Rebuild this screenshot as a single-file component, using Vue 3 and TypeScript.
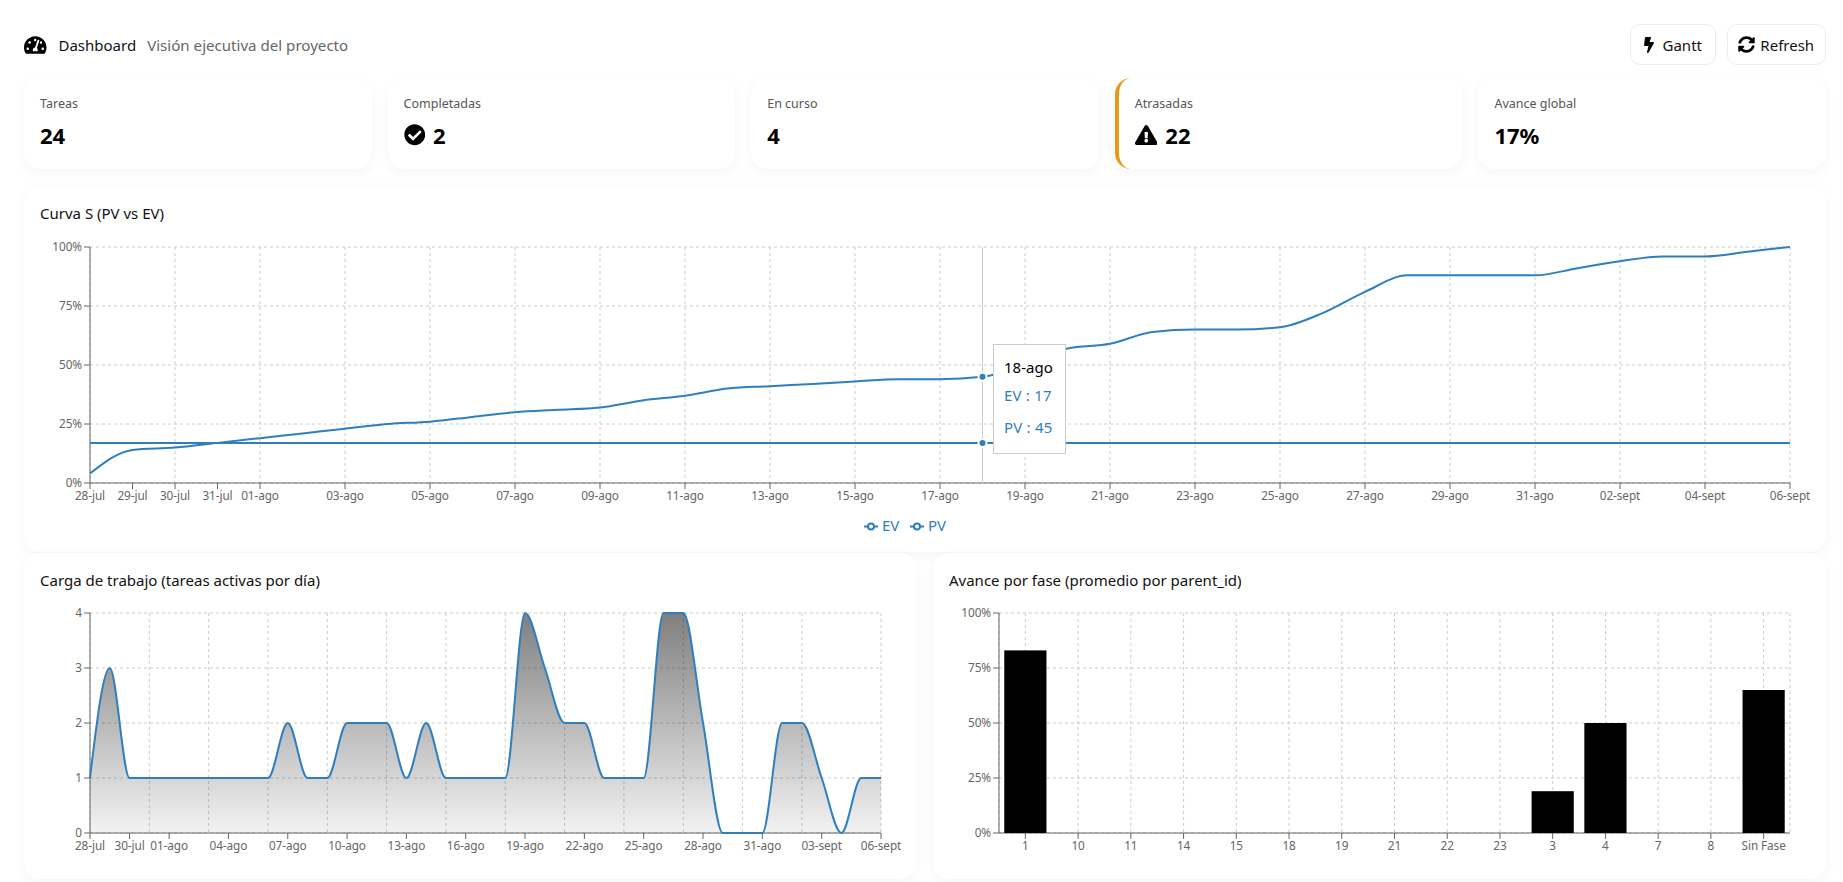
<script setup lang="ts">
type Pt = [number, number]

function sign(v: number): number {
  return v < 0 ? -1 : 1
}

function monotone(pts: Pt[]): string {
  const n = pts.length
  const t: number[] = new Array(n).fill(0)
  for (let i = 1; i < n - 1; i++) {
    const h0 = pts[i][0] - pts[i - 1][0]
    const h1 = pts[i + 1][0] - pts[i][0]
    const s0 = (pts[i][1] - pts[i - 1][1]) / h0
    const s1 = (pts[i + 1][1] - pts[i][1]) / h1
    const p = (s0 * h1 + s1 * h0) / (h0 + h1)
    t[i] = (sign(s0) + sign(s1)) * Math.min(Math.abs(s0), Math.abs(s1), 0.5 * Math.abs(p)) || 0
  }
  const end = (a: number, b: number, tan: number) =>
    (3 * (pts[b][1] - pts[a][1])) / (pts[b][0] - pts[a][0]) / 2 - tan / 2
  t[0] = end(0, 1, t[1])
  t[n - 1] = end(n - 2, n - 1, t[n - 2])
  let d = `M${pts[0][0]},${pts[0][1]}`
  for (let i = 0; i < n - 1; i++) {
    const dx = (pts[i + 1][0] - pts[i][0]) / 3
    d += `C${pts[i][0] + dx},${pts[i][1] + dx * t[i]},${pts[i + 1][0] - dx},${pts[i + 1][1] - dx * t[i + 1]},${pts[i + 1][0]},${pts[i + 1][1]}`
  }
  return d
}

function dayLabel(i: number): string {
  const start = Date.UTC(2025, 6, 28)
  const date = new Date(start + i * 86400000)
  const dd = String(date.getUTCDate()).padStart(2, '0')
  const months = ['ene', 'feb', 'mar', 'abr', 'may', 'jun', 'jul', 'ago', 'sept']
  return `${dd}-${months[date.getUTCMonth()]}`
}

const cards = [
  { label: 'Tareas', value: '24', icon: '', warn: false },
  { label: 'Completadas', value: '2', icon: 'check', warn: false },
  { label: 'En curso', value: '4', icon: '', warn: false },
  { label: 'Atrasadas', value: '22', icon: 'warn', warn: true },
  { label: 'Avance global', value: '17%', icon: '', warn: false },
]

/* Curva S */
const sLeft = 90
const sRight = 1790
const sTop = 247
const sBottom = 483
const sDay = (sRight - sLeft) / 40
const sX = (i: number) => sLeft + i * sDay
const sY = (v: number) => sBottom - (v / 100) * (sBottom - sTop)
const pv = [
  4, 14, 15, 17, 19, 21, 23, 25, 26, 28, 30, 31, 32, 35, 37, 40, 41, 42, 43, 44, 44, 45, 50, 57, 59, 64,
  65, 65, 66, 72, 81, 88, 88, 88, 88, 91, 94, 96, 96, 98, 100,
]
const pvPath = monotone(pv.map((v, i): Pt => [sX(i), sY(v)]))
const evY = sY(17)
const sTicks = [0, 1, 2, 3, ...Array.from({ length: 19 }, (_, k) => 4 + k * 2)]
const sGrid = Array.from({ length: 21 }, (_, k) => sX(k * 2))
const sH = [0, 25, 50, 75, 100]

/* Carga */
const cLeft = 90
const cRight = 881
const cTop = 613
const cBottom = 833
const cDay = (cRight - cLeft) / 40
const cX = (i: number) => cLeft + i * cDay
const cY = (v: number) => cBottom - (v / 4) * (cBottom - cTop)
const load = [
  1, 3, 1, 1, 1, 1, 1, 1, 1, 1, 2, 1, 1, 2, 2, 2, 1, 2, 1, 1, 1, 1, 4, 3, 2, 2, 1, 1, 1, 4, 4, 2, 0, 0, 0, 2,
  2, 1, 0, 1, 1,
]
const loadPath = monotone(load.map((v, i): Pt => [cX(i), cY(v)]))
const areaPath = `${loadPath}L${cRight},${cBottom}L${cLeft},${cBottom}Z`
const cTicks = [0, 2, 4, 7, 10, 13, 16, 19, 22, 25, 28, 31, 34, 37, 40]
const cGrid = [0, 3, 6, 9, 12, 15, 18, 21, 24, 27, 30, 33, 36, 40].map(cX)
const cH = [0, 1, 2, 3, 4]

/* Avance */
const pLeft = 999
const pRight = 1790
const phases = [
  { name: '1', v: 83 },
  { name: '10', v: 0 },
  { name: '11', v: 0 },
  { name: '14', v: 0 },
  { name: '15', v: 0 },
  { name: '18', v: 0 },
  { name: '19', v: 0 },
  { name: '21', v: 0 },
  { name: '22', v: 0 },
  { name: '23', v: 0 },
  { name: '3', v: 19 },
  { name: '4', v: 50 },
  { name: '7', v: 0 },
  { name: '8', v: 0 },
  { name: 'Sin Fase', v: 65 },
]
const band = (pRight - pLeft) / phases.length
const pX = (i: number) => pLeft + band * (i + 0.5)
const barW = band * 0.8
const pY = (v: number) => cBottom - (v / 100) * (cBottom - cTop)
const pGrid = [pLeft, ...phases.map((_, i) => pX(i)), pRight]
</script>

<template>
  <div class="page">
    <header class="top">
      <div class="heading">
        <svg class="ic-dash" viewBox="0 0 576 512" aria-hidden="true">
          <path d="M288 32C128.94 32 0 160.94 0 320c0 52.8 14.25 102.26 39.06 144.8 5.61 9.62 16.3 15.2 27.44 15.2h443c11.14 0 21.83-5.58 27.44-15.2C561.75 422.26 576 372.8 576 320c0-159.06-128.94-288-288-288zm0 64c14.71 0 26.58 10.13 30.32 23.65-1.11 2.26-2.64 4.23-3.45 6.67l-9.22 27.67c-5.13 3.49-10.97 6.01-17.64 6.01-17.67 0-32-14.33-32-32S270.33 96 288 96zM96 384c-17.67 0-32-14.33-32-32s14.33-32 32-32 32 14.33 32 32-14.33 32-32 32zm48-160c-17.67 0-32-14.33-32-32s14.33-32 32-32 32 14.33 32 32-14.33 32-32 32zm246.77-72.41l-61.33 184C343.13 347.33 352 364.54 352 384c0 11.72-3.38 22.55-8.88 32H232.88c-5.5-9.45-8.88-20.28-8.88-32 0-33.94 26.5-61.43 59.9-63.59l61.34-184.01c4.17-12.56 17.73-19.45 30.36-15.17 12.57 4.19 19.35 17.79 15.17 30.36zm14.66 57.2l15.52-46.55c3.47-1.29 7.13-2.23 11.05-2.23 17.67 0 32 14.33 32 32s-14.33 32-32 32c-11.38-.01-20.89-6.28-26.57-15.22zM480 384c-17.67 0-32-14.33-32-32s14.33-32 32-32 32 14.33 32 32-14.33 32-32 32z" />
        </svg>
        <span class="h-title">Dashboard</span>
        <span class="h-sub">Visión ejecutiva del proyecto</span>
      </div>
      <div class="actions">
        <button class="btn" type="button">
          <svg class="ic-bolt" viewBox="0 0 320 512" aria-hidden="true">
            <path d="M296 160H180.6l42.6-129.8C227.2 15 215.7 0 200 0H56C44 0 33.8 8.9 32.2 20.8l-32 240C-1.7 275.2 9.5 288 24 288h118.7L96.6 482.5c-3.6 15.2 8 29.5 23.3 29.5 8.4 0 16.4-4.4 20.8-12l176-304c9.3-15.9-2.2-36-20.7-36z" />
          </svg>
          <span>Gantt</span>
        </button>
        <button class="btn btn-r" type="button">
          <svg class="ic-sync" viewBox="0 0 512 512" aria-hidden="true">
            <path d="M370.72 133.28C339.458 104.008 298.888 87.962 255.848 88c-77.458.068-144.328 53.178-162.791 126.85-1.344 5.363-6.122 9.15-11.651 9.15H24.103c-7.498 0-13.194-6.807-11.807-14.176C33.933 94.924 134.813 8 256 8c66.448 0 126.791 26.136 171.315 68.685L463.03 40.97C478.149 25.851 504 36.559 504 57.941V192c0 13.255-10.745 24-24 24H345.941c-21.382 0-32.09-25.851-16.971-40.971l41.75-41.749zM32 296h134.059c21.382 0 32.09 25.851 16.971 40.971l-41.75 41.75c31.262 29.273 71.835 45.319 114.876 45.28 77.418-.07 144.315-53.144 162.787-126.849 1.344-5.363 6.122-9.15 11.651-9.15h57.304c7.498 0 13.194 6.807 11.807 14.176C478.067 417.076 377.187 504 256 504c-66.448 0-126.791-26.136-171.315-68.685L48.97 471.03C33.851 486.149 8 475.441 8 454.059V320c0-13.255 10.745-24 24-24z" />
          </svg>
          <span>Refresh</span>
        </button>
      </div>
    </header>

    <section class="kpis">
      <div v-for="c in cards" :key="c.label" class="kpi" :class="{ warn: c.warn }">
        <div class="kpi-label">{{ c.label }}</div>
        <div class="kpi-value">
          <svg v-if="c.icon === 'check'" class="ic-check" viewBox="0 0 512 512" aria-hidden="true">
            <path d="M504 256c0 136.967-111.033 248-248 248S8 392.967 8 256 119.033 8 256 8s248 111.033 248 248zM227.314 387.314l184-184c6.248-6.248 6.248-16.379 0-22.627l-22.627-22.627c-6.248-6.249-16.379-6.249-22.628 0L216 308.118l-70.059-70.059c-6.248-6.248-16.379-6.248-22.628 0l-22.627 22.627c-6.248 6.248-6.248 16.379 0 22.627l104 104c6.249 6.249 16.379 6.249 22.628.001z" />
          </svg>
          <svg v-if="c.icon === 'warn'" class="ic-warn" viewBox="0 0 576 512" aria-hidden="true">
            <path d="M569.517 440.013C587.975 472.007 564.806 512 527.94 512H48.054c-36.937 0-59.999-40.055-41.577-71.987L246.423 23.985c18.467-32.009 64.72-31.951 83.154 0l239.94 416.028zM288 354c-25.405 0-46 20.595-46 46s20.595 46 46 46 46-20.595 46-46-20.595-46-46-46zm-43.673-165.346l7.418 136c.347 6.364 5.609 11.346 11.982 11.346h48.546c6.373 0 11.635-4.982 11.982-11.346l7.418-136c.375-6.874-5.098-12.654-11.982-12.654h-63.383c-6.884 0-12.356 5.78-11.981 12.654z" />
          </svg>
          <span>{{ c.value }}</span>
        </div>
      </div>
    </section>

    <section class="card card-s">
      <h3 class="card-title">Curva S (PV vs EV)</h3>
      <div class="chart-wrap">
        <svg class="chart" viewBox="40 236 1770 300" width="1770" height="300">
          <g class="grid">
            <line v-for="v in sH" :key="'h' + v" :x1="sLeft" :x2="sRight" :y1="sY(v)" :y2="sY(v)" />
            <line v-for="x in sGrid" :key="'v' + x" :x1="x" :x2="x" :y1="sTop" :y2="sBottom" />
          </g>
          <g class="axis">
            <line :x1="sLeft" :x2="sLeft" :y1="sTop" :y2="sBottom" />
            <line :x1="sLeft" :x2="sRight" :y1="sBottom" :y2="sBottom" />
            <line v-for="v in sH" :key="'yt' + v" :x1="sLeft - 6" :x2="sLeft" :y1="sY(v)" :y2="sY(v)" />
            <line v-for="i in sTicks" :key="'xt' + i" :x1="sX(i)" :x2="sX(i)" :y1="sBottom" :y2="sBottom + 6" />
          </g>
          <text v-for="v in sH" :key="'yl' + v" class="tick" text-anchor="end" :x="sLeft - 8" :y="sY(v) + 3.5">{{ v }}%</text>
          <text v-for="i in sTicks" :key="'xl' + i" class="tick" text-anchor="middle" :x="sX(i)" :y="sBottom + 16.5">{{ dayLabel(i) }}</text>
          <line class="cursor" :x1="sX(21)" :x2="sX(21)" :y1="sTop" :y2="sBottom" />
          <line class="series" :x1="sLeft" :x2="sRight" :y1="evY" :y2="evY" />
          <path class="series" :d="pvPath" />
          <circle class="dot" :cx="sX(21)" :cy="sY(45)" r="4" />
          <circle class="dot" :cx="sX(21)" :cy="evY" r="4" />
          <g class="legend">
            <line x1="864" x2="878" y1="526.5" y2="526.5" />
            <circle cx="871" cy="526.5" r="3" />
            <text x="882" y="531">EV</text>
            <line x1="910" x2="924" y1="526.5" y2="526.5" />
            <circle cx="917" cy="526.5" r="3" />
            <text x="928" y="531">PV</text>
          </g>
        </svg>
        <div class="tooltip">
          <div class="tt-label">18-ago</div>
          <div class="tt-item">EV : 17</div>
          <div class="tt-item">PV : 45</div>
        </div>
      </div>
    </section>

    <section class="bottom">
      <div class="card">
        <h3 class="card-title">Carga de trabajo (tareas activas por día)</h3>
        <svg class="chart" viewBox="40 603 861 260" width="861" height="260">
          <defs>
            <linearGradient id="loadFill" x1="0" y1="0" x2="0" y2="1">
              <stop offset="0" stop-color="#000" stop-opacity="0.5" />
              <stop offset="1" stop-color="#000" stop-opacity="0.05" />
            </linearGradient>
          </defs>
          <g class="grid">
            <line v-for="v in cH" :key="'h' + v" :x1="cLeft" :x2="cRight" :y1="cY(v)" :y2="cY(v)" />
            <line v-for="x in cGrid" :key="'v' + x" :x1="x" :x2="x" :y1="cTop" :y2="cBottom" />
          </g>
          <path :d="areaPath" fill="url(#loadFill)" />
          <g class="axis">
            <line :x1="cLeft" :x2="cLeft" :y1="cTop" :y2="cBottom" />
            <line :x1="cLeft" :x2="cRight" :y1="cBottom" :y2="cBottom" />
            <line v-for="v in cH" :key="'yt' + v" :x1="cLeft - 6" :x2="cLeft" :y1="cY(v)" :y2="cY(v)" />
            <line v-for="i in cTicks" :key="'xt' + i" :x1="cX(i)" :x2="cX(i)" :y1="cBottom" :y2="cBottom + 6" />
          </g>
          <text v-for="v in cH" :key="'yl' + v" class="tick" text-anchor="end" :x="cLeft - 8" :y="cY(v) + 3.5">{{ v }}</text>
          <text v-for="i in cTicks" :key="'xl' + i" class="tick" text-anchor="middle" :x="cX(i)" :y="cBottom + 16.5">{{ dayLabel(i) }}</text>
          <path class="series" :d="loadPath" />
        </svg>
      </div>
      <div class="card">
        <h3 class="card-title">Avance por fase (promedio por parent_id)</h3>
        <svg class="chart" viewBox="949 603 861 260" width="861" height="260">
          <g class="grid">
            <line v-for="v in sH" :key="'h' + v" :x1="pLeft" :x2="pRight" :y1="pY(v)" :y2="pY(v)" />
            <line v-for="x in pGrid" :key="'v' + x" :x1="x" :x2="x" :y1="cTop" :y2="cBottom" />
          </g>
          <g class="axis">
            <line :x1="pLeft" :x2="pLeft" :y1="cTop" :y2="cBottom" />
            <line :x1="pLeft" :x2="pRight" :y1="cBottom" :y2="cBottom" />
            <line v-for="v in sH" :key="'yt' + v" :x1="pLeft - 6" :x2="pLeft" :y1="pY(v)" :y2="pY(v)" />
            <line v-for="(p, i) in phases" :key="'xt' + p.name" :x1="pX(i)" :x2="pX(i)" :y1="cBottom" :y2="cBottom + 6" />
          </g>
          <text v-for="v in sH" :key="'yl' + v" class="tick" text-anchor="end" :x="pLeft - 8" :y="pY(v) + 3.5">{{ v }}%</text>
          <text v-for="(p, i) in phases" :key="'xl' + p.name" class="tick" text-anchor="middle" :x="pX(i)" :y="cBottom + 16.5">{{ p.name }}</text>
          <template v-for="(p, i) in phases" :key="'b' + p.name">
            <rect v-if="p.v > 0" class="bar" :x="pX(i) - barW / 2" :y="pY(p.v)" :width="barW" :height="cBottom - pY(p.v)" />
          </template>
        </svg>
      </div>
    </section>
  </div>
</template>

<style scoped>
.page {
  box-sizing: border-box;
  width: 1843px;
  height: 882px;
  overflow: hidden;
  padding: 24px 17px 0 24px;
  background: #fff;
  font-family: "Noto Sans", "Open Sans", sans-serif;
  color: #111;
}
.top {
  display: flex;
  justify-content: space-between;
  align-items: center;
  height: 41px;
  margin-bottom: 13px;
}
.heading {
  display: flex;
  align-items: center;
}
.ic-dash {
  width: 22.5px;
  height: 20px;
  margin-right: 12px;
  fill: #000;
}
.h-title {
  font-size: 15px;
  color: #111;
  margin-right: 11px;
}
.h-sub {
  font-size: 15.1px;
  color: #666;
}
.actions {
  display: flex;
  gap: 10.5px;
}
.btn {
  display: flex;
  align-items: center;
  justify-content: center;
  gap: 9px;
  box-sizing: border-box;
  width: 86.5px;
  height: 41px;
  padding: 0;
  border: 1px solid #ececec;
  border-radius: 10px;
  background: #fff;
  font: inherit;
  font-size: 15px;
  color: #111;
}
.btn-r {
  width: 99.5px;
  gap: 5px;
}
.ic-bolt {
  width: 10px;
  height: 16px;
  fill: #000;
}
.ic-sync {
  width: 17px;
  height: 17px;
  fill: #000;
}
.kpis {
  display: grid;
  grid-template-columns: repeat(5, 1fr);
  gap: 16px;
  margin-bottom: 17px;
}
.kpi,
.card {
  box-sizing: border-box;
  background: #fff;
  border-radius: 16px;
  box-shadow: 0 4px 14px rgba(0, 0, 0, 0.045);
}
.kpi {
  height: 91px;
  padding: 16px;
}
.kpi.warn {
  border-left: 4px solid #e69b17;
}
.kpi-label {
  font-size: 12.5px;
  line-height: 20px;
  color: #555;
}
.kpi-value {
  display: flex;
  align-items: center;
  gap: 8px;
  margin-top: 6px;
  height: 30px;
  font-size: 22px;
  font-weight: 700;
  color: #000;
}
.ic-check {
  width: 21.5px;
  height: 21.5px;
  fill: #000;
}
.ic-warn {
  width: 22.5px;
  height: 20px;
  fill: #000;
}
.card {
  padding: 16px;
}
.card-s {
  height: 366px;
  margin-bottom: 1px;
}
.card-title {
  margin: 0 0 11px;
  font-size: 15px;
  font-weight: 400;
  line-height: 23px;
  color: #111;
}
.chart-wrap {
  position: relative;
}
.chart {
  display: block;
}
.grid line {
  stroke: #ccc;
  stroke-width: 1;
  stroke-dasharray: 3 3;
}
.axis line {
  stroke: #666;
  stroke-width: 1;
}
.tick {
  font-size: 11.8px;
  fill: #666;
  letter-spacing: -0.1px;
}
.cursor {
  stroke: #ccc;
  stroke-width: 1;
}
.series {
  fill: none;
  stroke: #2f7fbf;
  stroke-width: 2;
}
.dot {
  fill: #2f7fbf;
  stroke: #fff;
  stroke-width: 2;
}
.legend line {
  stroke: #2f7fbf;
  stroke-width: 2;
}
.legend circle {
  fill: #fff;
  stroke: #2f7fbf;
  stroke-width: 2;
}
.legend text {
  font-size: 15px;
  fill: #2f7fbf;
}
.bar {
  fill: #000;
}
.tooltip {
  position: absolute;
  left: 953px;
  top: 108px;
  box-sizing: border-box;
  width: 73px;
  height: 110px;
  padding: 10px;
  border: 1px solid #ccc;
  background: #fff;
  white-space: nowrap;
  font-size: 15px;
  line-height: 24px;
}
.tt-label {
  color: #000;
}
.tt-item {
  padding: 4px 0;
  color: #2f7fbf;
  letter-spacing: 0.2px;
}
.bottom {
  display: grid;
  grid-template-columns: 1fr 1fr;
  gap: 16px;
  height: 326px;
}
</style>

<style>
html,
body {
  margin: 0;
  background: #fff;
}
</style>
